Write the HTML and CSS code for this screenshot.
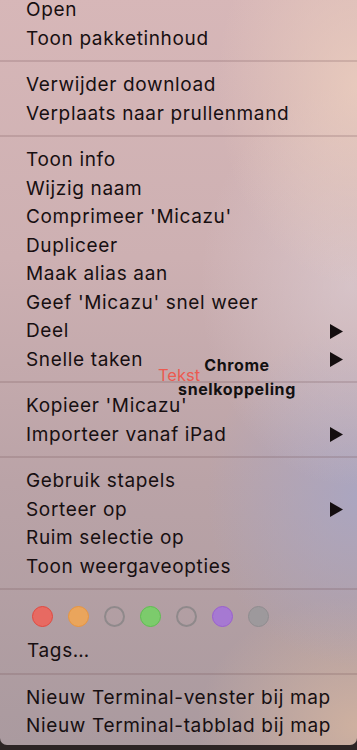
FILE: index.html
```html
<!DOCTYPE html>
<html lang="nl">
<head>
<meta charset="utf-8">
<title>Contextmenu</title>
<link rel="stylesheet" href="styles.css">
</head>
<body>
<div class="menu">
  <div class="item">Open</div>
  <div class="item">Toon pakketinhoud</div>
  <div class="sep"></div>
  <div class="item">Verwijder download</div>
  <div class="item">Verplaats naar prullenmand</div>
  <div class="sep"></div>
  <div class="item">Toon info</div>
  <div class="item">Wijzig naam</div>
  <div class="item">Comprimeer 'Micazu'</div>
  <div class="item">Dupliceer</div>
  <div class="item">Maak alias aan</div>
  <div class="item">Geef 'Micazu' snel weer</div>
  <div class="item sub">Deel<svg class="arrow" viewBox="0 0 13 15"><polygon points="0,0 13,7.5 0,15"/></svg></div>
  <div class="item sub">Snelle taken<svg class="arrow" viewBox="0 0 13 15"><polygon points="0,0 13,7.5 0,15"/></svg></div>
  <div class="sep"></div>
  <div class="item">Kopieer 'Micazu'</div>
  <div class="item sub">Importeer vanaf iPad<svg class="arrow" viewBox="0 0 13 15"><polygon points="0,0 13,7.5 0,15"/></svg></div>
  <div class="sep"></div>
  <div class="item">Gebruik stapels</div>
  <div class="item sub">Sorteer op<svg class="arrow" viewBox="0 0 13 15"><polygon points="0,0 13,7.5 0,15"/></svg></div>
  <div class="item">Ruim selectie op</div>
  <div class="item">Toon weergaveopties</div>
  <div class="sep"></div>
  <div class="tag-dots">
    <span class="dot red"></span>
    <span class="dot orange"></span>
    <span class="dot hollow"></span>
    <span class="dot green"></span>
    <span class="dot hollow"></span>
    <span class="dot purple"></span>
    <span class="dot gray"></span>
  </div>
  <div class="item tags">Tags…</div>
  <div class="sep"></div>
  <div class="item">Nieuw Terminal-venster bij map</div>
  <div class="item">Nieuw Terminal-tabblad bij map</div>

  <div class="desk-text">Tekst</div>
  <div class="desk-label">Chrome<br>snelkoppeling</div>
</div>
</body>
</html>
```

FILE: styles.css
```css
html, body {
  margin: 0;
  padding: 0;
}
body {
  width: 357px;
  height: 750px;
  overflow: hidden;
  background: #2d2525;
  font-family: "Inter", "Liberation Sans", sans-serif;
}
.menu {
  position: relative;
  margin-top: -4px;
  height: 749px;
  box-sizing: border-box;
  display: flex;
  flex-direction: column;
  border-radius: 0 0 7px 7px;
  overflow: hidden;
  background:
    radial-gradient(ellipse 140px 200px at 357px 90px, rgba(236, 206, 190, 0.8), rgba(236, 206, 190, 0)),
    radial-gradient(ellipse 150px 200px at 350px 290px, rgba(222, 208, 214, 0.6), rgba(222, 208, 214, 0)),
    radial-gradient(ellipse 150px 170px at 357px 500px, rgba(168, 166, 196, 0.85), rgba(168, 166, 196, 0)),
    radial-gradient(ellipse 160px 130px at 357px 730px, rgba(212, 180, 160, 0.85), rgba(212, 180, 160, 0)),
    linear-gradient(to bottom, #d7b7b8 0%, #cdb0b2 35%, #baa3a7 65%, #aa9a9f 100%);
}
.item {
  height: 28.5px;
  line-height: 28.5px;
  font-size: 19px;
  letter-spacing: 0.65px;
  color: #170f11;
  padding: 0 14px 0 26px;
  white-space: nowrap;
  flex: none;
}
.item.sub {
  display: flex;
  align-items: center;
  justify-content: space-between;
}
.arrow {
  width: 13px;
  height: 15px;
  fill: #140e0f;
}
.item.tags {
  padding-left: 27px;
  margin-top: 10px;
}
.sep {
  flex: none;
  height: 18px;
  box-sizing: border-box;
  padding: 7px 0 9px;
}
.sep::before {
  content: "";
  display: block;
  height: 2px;
  background: rgba(110, 75, 82, 0.2);
}
.tag-dots {
  flex: none;
  display: flex;
  gap: 15px;
  padding: 7px 0 0 32px;
  height: 21px;
}
.dot {
  width: 21px;
  height: 21px;
  box-sizing: border-box;
  border-radius: 50%;
  border: 1.5px solid transparent;
}
.dot.red { background: #e76a62; border-color: #e2483f; }
.dot.orange { background: #eaa55c; border-color: #e9953d; }
.dot.hollow { border: 2px solid #8f898b; }
.dot.green { background: #7ccb6c; border-color: #5dbf4f; }
.dot.purple { background: #a679d2; border-color: #9a5ed1; }
.dot.gray { background: #9d999c; border-color: #8f8c8f; }

.desk-text {
  position: absolute;
  left: 158px;
  top: 369px;
  font-size: 16.5px;
  line-height: 20px;
  color: #ec5a50;
}
.desk-label {
  position: absolute;
  left: 157px;
  width: 160px;
  top: 357px;
  text-align: center;
  font-size: 16px;
  letter-spacing: 0.6px;
  font-weight: 700;
  line-height: 24px;
  color: #121010;
}
```
